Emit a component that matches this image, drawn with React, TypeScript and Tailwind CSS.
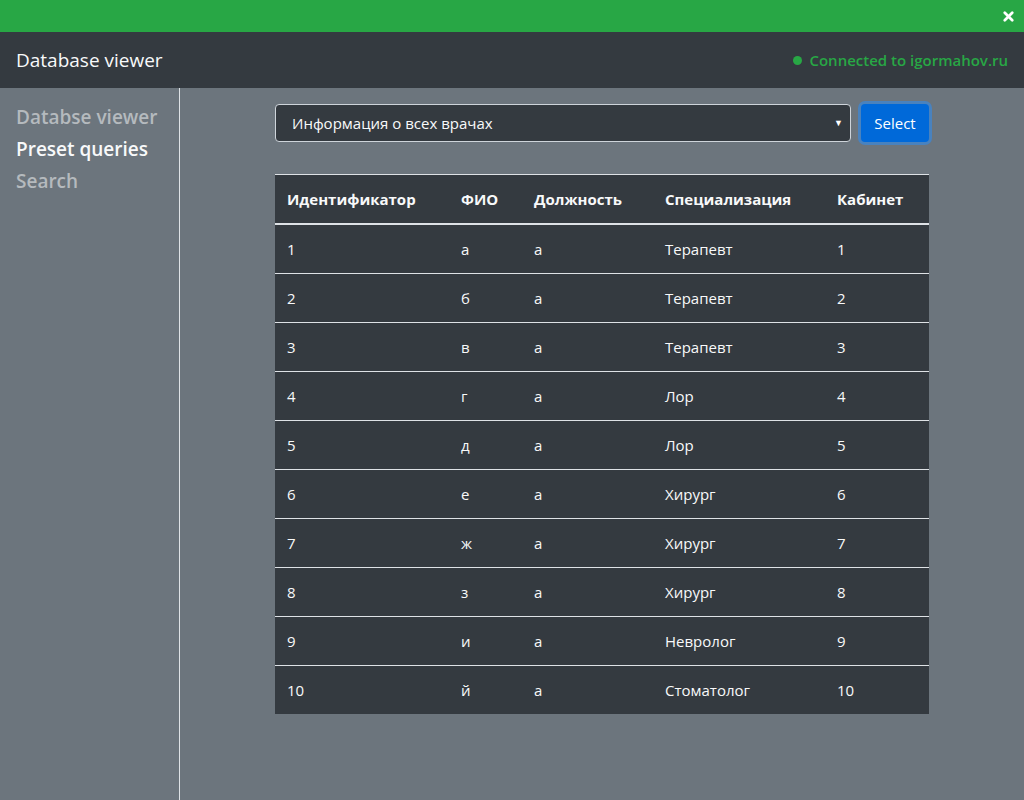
import { X } from "lucide-react";

const doctors = [
  { id: 1, name: "а", position: "а", spec: "Терапевт", room: 1 },
  { id: 2, name: "б", position: "а", spec: "Терапевт", room: 2 },
  { id: 3, name: "в", position: "а", spec: "Терапевт", room: 3 },
  { id: 4, name: "г", position: "а", spec: "Лор", room: 4 },
  { id: 5, name: "д", position: "а", spec: "Лор", room: 5 },
  { id: 6, name: "е", position: "а", spec: "Хирург", room: 6 },
  { id: 7, name: "ж", position: "а", spec: "Хирург", room: 7 },
  { id: 8, name: "з", position: "а", spec: "Хирург", room: 8 },
  { id: 9, name: "и", position: "а", spec: "Невролог", room: 9 },
  { id: 10, name: "й", position: "а", spec: "Стоматолог", room: 10 }
];

const columns = [
  { label: "Идентификатор", width: "w-[174px]" },
  { label: "ФИО", width: "w-[73px]" },
  { label: "Должность", width: "w-[131px]" },
  { label: "Специализация", width: "w-[172px]" },
  { label: "Кабинет", width: "w-[104px]" }
];

const navItems = [
  { label: "Databse viewer", active: false },
  { label: "Preset queries", active: true },
  { label: "Search", active: false }
];

export default function App() {
  return (
    <div className="flex h-[800px] flex-col overflow-hidden bg-[#6c757d] font-['Open_Sans',sans-serif] text-[15px] text-white">
      <div className="flex h-8 shrink-0 items-center justify-end bg-[#28a745] pr-[8px]">
        <X size={15} strokeWidth={4.5} className="text-white" />
      </div>

      <header className="flex h-14 shrink-0 items-center justify-between bg-[#343a40] px-4">
        <span className="text-[19px] text-[#f8f9fa]">Database viewer</span>
        <span className="flex items-center gap-[7px] text-[15px] font-semibold text-[#28a745]">
          <span className="h-[9px] w-[9px] rounded-full bg-[#28a745]" />
          Connected to igormahov.ru
        </span>
      </header>

      <div className="flex min-h-0 flex-1">
        <nav className="w-[180px] shrink-0 border-r border-[#dee2e6] pl-4 pt-[13px]">
          {navItems.map((item) => (
            <div
              key={item.label}
              className={`h-8 text-[19px] font-semibold leading-8 ${item.active ? "text-[#f8f9fa]" : "text-[#b5babe]"}`}
            >
              {item.label}
            </div>
          ))}
        </nav>

        <main className="flex-1 pt-4">
          <div className="mx-auto w-[654px]">
            <div className="flex items-center gap-[10px]">
              <div className="relative flex h-[38px] flex-1 items-center rounded border border-[#ced4da] bg-[#343a40] pl-4">
                <span className="text-[15px] text-[#f8f9fa]">Информация о всех врачах</span>
                <span className="absolute right-[7px] top-[11px] text-[9px] text-white">▼</span>
              </div>
              <button className="h-[38px] w-[68px] rounded bg-[#0069d9] text-[15px] text-white shadow-[0_0_0_3px_rgba(38,143,255,0.5)]">
                Select
              </button>
            </div>

            <table className="mt-8 w-full table-fixed border-collapse bg-[#343a40] text-left leading-6 text-[#f8f9fa]">
              <thead>
                <tr className="border-t border-b-2 border-[#dee2e6]">
                  {columns.map((col) => (
                    <th key={col.label} className={`${col.width} px-3 py-3 font-bold`}>
                      {col.label}
                    </th>
                  ))}
                </tr>
              </thead>
              <tbody>
                {doctors.map((d) => (
                  <tr key={d.id} className="border-t border-[#dee2e6]">
                    <td className="px-3 py-3">{d.id}</td>
                    <td className="px-3 py-3">{d.name}</td>
                    <td className="px-3 py-3">{d.position}</td>
                    <td className="px-3 py-3">{d.spec}</td>
                    <td className="px-3 py-3">{d.room}</td>
                  </tr>
                ))}
              </tbody>
            </table>
          </div>
        </main>
      </div>
    </div>
  );
}
